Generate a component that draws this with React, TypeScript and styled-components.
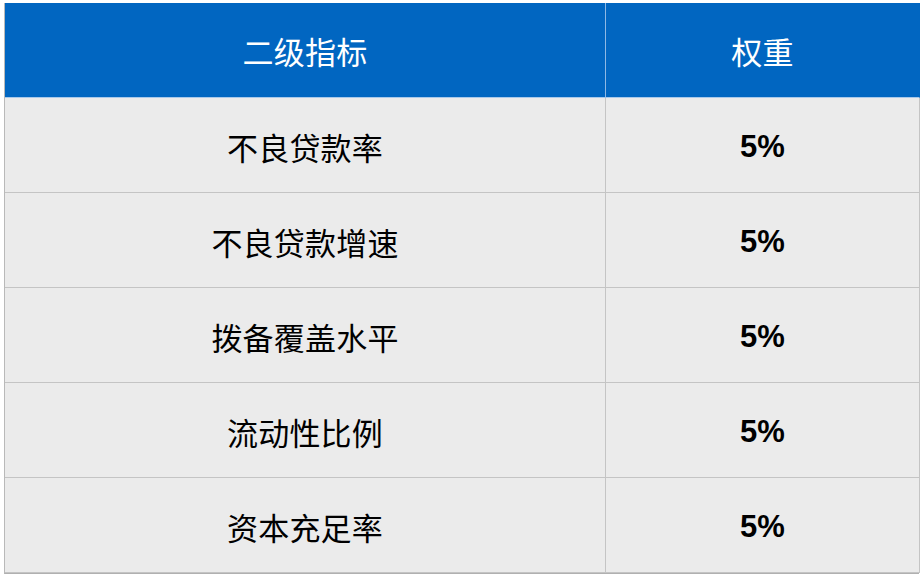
import { Fragment } from 'react';
import styled, { createGlobalStyle } from 'styled-components';

const GlobalStyle = createGlobalStyle`
    html, body {
        margin: 0;
        padding: 0;
        background: #ffffff;
    }
    body {
        font-family: 'Liberation Sans', 'Noto Sans CJK SC', sans-serif;
    }
`;

const Page = styled.div`
    padding: 3px 0 0 4px;
`;

const Table = styled.div`
    display: grid;
    grid-template-columns: 601px 314px;
    grid-auto-rows: 95px;
    width: 915px;
    border-left: 1px solid #b9b9b9;
    border-bottom: 1px solid #b0b0b0;
    box-sizing: border-box;
`;

interface CellProps {
    $head?: boolean;
    $last?: boolean;
}

const Cell = styled.div<CellProps>`
    display: flex;
    align-items: center;
    justify-content: center;
    box-sizing: border-box;
    background: ${({ $head }) => ($head ? '#0166c1' : '#ebebeb')};
    color: ${({ $head }) => ($head ? '#ffffff' : '#000000')};
    border-right: 1px solid ${({ $head, $last }) => ($head ? ($last ? '#0166c1' : '#8fb8e4') : '#c4c4c4')};
    border-bottom: 1px solid ${({ $head }) => ($head ? '#a9c9ea' : '#c4c4c4')};
    font-family: 'Noto Sans CJK SC', sans-serif;
    font-size: 31px;
    font-weight: 400;
    letter-spacing: 0.2px;
    padding-top: ${({ $head }) => ($head ? '0' : '2px')};
`;

const Weight = styled.span`
    font-family: 'Liberation Sans', Arial, sans-serif;
    font-weight: 700;
    font-size: 31px;
    margin-top: 2px;
`;

const rows = ['不良贷款率', '不良贷款增速', '拨备覆盖水平', '流动性比例', '资本充足率'];

export default function App() {
    return (
        <>
            <GlobalStyle />
            <Page>
                <Table>
                    <Cell $head>二级指标</Cell>
                    <Cell $head $last>权重</Cell>
                    {rows.map((name) => (
                        <Fragment key={name}>
                            <Cell>{name}</Cell>
                            <Cell $last>
                                <Weight>5%</Weight>
                            </Cell>
                        </Fragment>
                    ))}
                </Table>
            </Page>
        </>
    );
}
